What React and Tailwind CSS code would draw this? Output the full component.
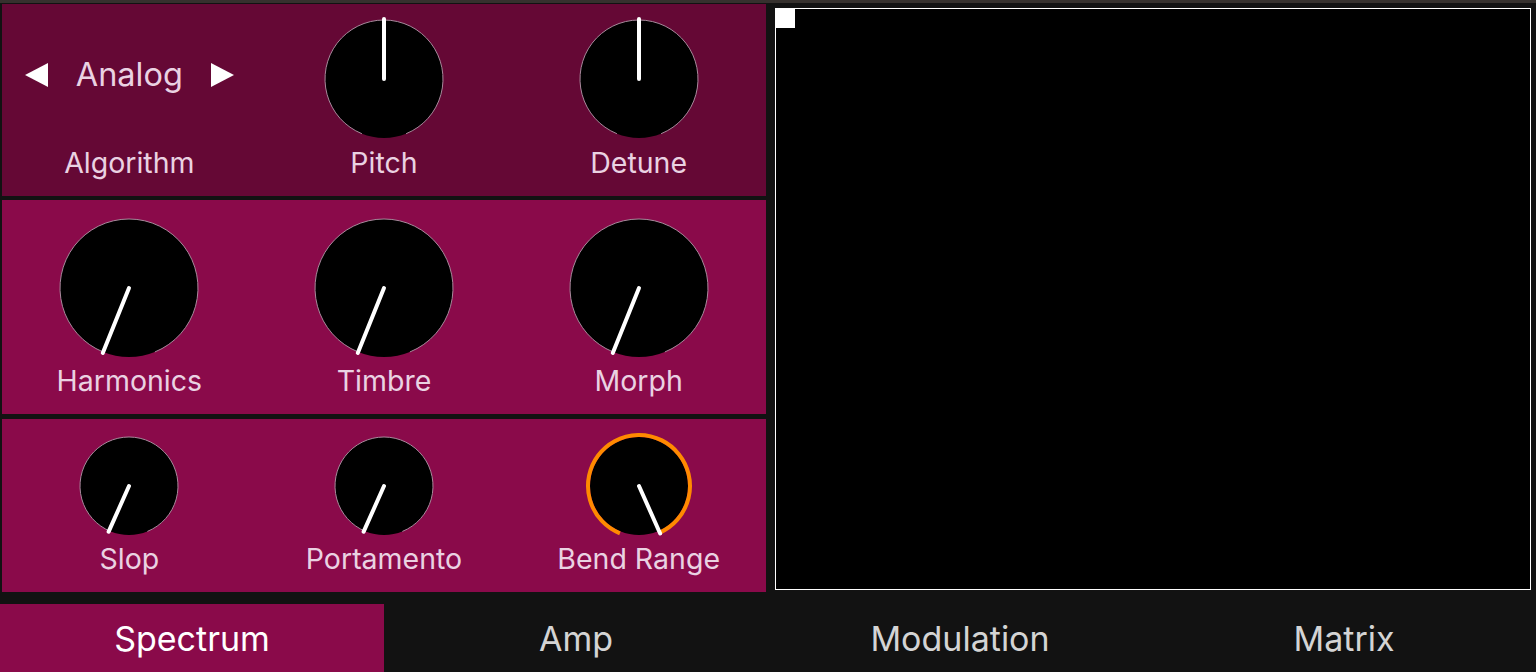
import React from 'react';

// Synth "Spectrum" page — three knob panels, a scope on the right, tab bar below.

const FONT = { fontFamily: 'Inter, "Noto Sans", sans-serif' };

function pt(cx, cy, r, deg) {
  const a = (deg * Math.PI) / 180;
  return [cx + r * Math.sin(a), cy - r * Math.cos(a)];
}

function arc(cx, cy, r, a1, a2) {
  const [x1, y1] = pt(cx, cy, r, a1);
  const [x2, y2] = pt(cx, cy, r, a2);
  const large = a2 - a1 > 180 ? 1 : 0;
  return `M ${x1} ${y1} A ${r} ${r} 0 ${large} 1 ${x2} ${y2}`;
}

function Knob({ d, angle, active }) {
  const box = d + 8;
  const c = box / 2;
  const r = d / 2;
  const [px, py] = pt(c, c, r + 1, angle);
  return (
    <svg width={box} height={box} viewBox={`0 0 ${box} ${box}`}>
      {active ? (
        <>
          <circle cx={c} cy={c} r={r - 2} fill="#000" />
          <path d={arc(c, c, r, -158, angle)} fill="none" stroke="#ff8a00" strokeWidth="4" />
        </>
      ) : (
        <>
          <circle cx={c} cy={c} r={r} fill="#000" />
          <path d={arc(c, c, r, -158, 158)} fill="none" stroke="#a88a9c" strokeWidth="1" />
        </>
      )}
      <line x1={c} y1={c} x2={px} y2={py} stroke="#fff" strokeWidth="4" strokeLinecap="round" />
    </svg>
  );
}

function Label({ children, className = '' }) {
  return <div className={`text-[28.5px] leading-[34px] text-[#ead2e2] ${className}`}>{children}</div>;
}

function Cell({ d, angle, label, active, pad, gap }) {
  return (
    <div className={`flex flex-col items-center ${pad}`}>
      <Knob d={d} angle={angle} active={active} />
      <Label className={gap}>{label}</Label>
    </div>
  );
}

const TABS = ['Spectrum', 'Amp', 'Modulation', 'Matrix'];

export default function App() {
  return (
    <div className="w-[1536px] h-[672px] bg-[#121212] flex flex-col overflow-hidden" style={FONT}>
      <div className="h-[3px] bg-[#36312e]" />
      <div className="h-[601px] flex">
        <div className="ml-[2px] w-[764px] pt-[1px] flex flex-col">
          <div className="h-[192px] bg-[#650835] grid grid-cols-3">
            <div className="flex flex-col items-center pt-[43px]">
              <div className="flex items-center gap-[28px] h-[56px]">
                <svg width="23" height="24" viewBox="0 0 23 24"><path d="M23 0 L23 24 L0 12 Z" fill="#fff" /></svg>
                <span className="text-[32.5px] text-[#ead2e2]">Analog</span>
                <svg width="23" height="24" viewBox="0 0 23 24"><path d="M0 0 L0 24 L23 12 Z" fill="#fff" /></svg>
              </div>
              <Label className="mt-[43px]">Algorithm</Label>
            </div>
            <Cell d={118} angle={0} label="Pitch" pad="pt-[12px]" gap="mt-[4px]" />
            <Cell d={118} angle={0} label="Detune" pad="pt-[12px]" gap="mt-[4px]" />
          </div>
          <div className="h-[214px] mt-[4px] bg-[#8a0a4a] grid grid-cols-3">
            <Cell d={138} angle={-158} label="Harmonics" pad="pt-[15px]" gap="mt-[3px]" />
            <Cell d={138} angle={-158} label="Timbre" pad="pt-[15px]" gap="mt-[3px]" />
            <Cell d={138} angle={-158} label="Morph" pad="pt-[15px]" gap="mt-[3px]" />
          </div>
          <div className="h-[173px] mt-[5px] bg-[#8a0a4a] grid grid-cols-3">
            <Cell d={98} angle={-156} label="Slop" pad="pt-[14px]" gap="mt-[3px]" />
            <Cell d={98} angle={-156} label="Portamento" pad="pt-[14px]" gap="mt-[3px]" />
            <Cell d={102} angle={156} label="Bend Range" active pad="pt-[12px]" gap="mt-[1px]" />
          </div>
        </div>
        <div className="ml-[9px] mt-[5px] w-[756px] h-[582px] bg-black border-[1.5px] border-white">
          <div className="w-[19px] h-[19px] bg-white" />
        </div>
      </div>
      <div className="h-[68px] grid grid-cols-4">
        {TABS.map((t, i) => (
          <div
            key={t}
            className={`flex items-center justify-center text-[34px] ${i === 0 ? 'bg-[#8a0a4a] text-white' : 'text-[#d4d4d4]'}`}
          >
            {t}
          </div>
        ))}
      </div>
    </div>
  );
}
